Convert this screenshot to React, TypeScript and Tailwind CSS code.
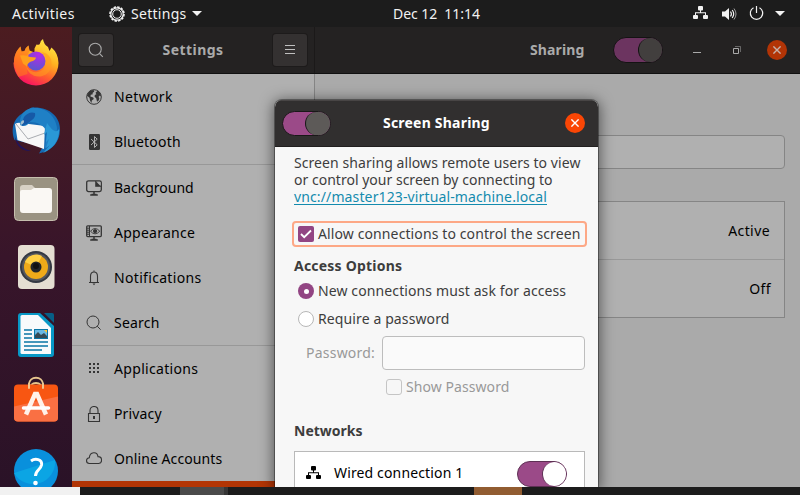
import React from "react";

function Lan({ className }: { className: string }) {
  return (
    <svg className={className} viewBox="0 0 16 14" fill="currentColor">
      <rect x="5" y="0" width="5" height="4.5" rx="1" />
      <rect x="0" y="9" width="5" height="4" rx="1" />
      <rect x="10" y="9" width="5" height="4" rx="1" />
      <path d="M7 4h1v2.2h5V9h-1V7.2H3V9H2V6.2h5z" />
    </svg>
  );
}

function Cross({ className }: { className: string }) {
  return (
    <span className={`grid size-5 shrink-0 place-items-center rounded-full ${className}`}>
      <svg className="size-2" viewBox="0 0 8 8" fill="none" stroke="currentColor" strokeWidth="1.4">
        <path d="M.4.4l7.2 7.2M7.6.4L.4 7.6" />
      </svg>
    </span>
  );
}

function Magnifier() {
  return (
    <svg className="mr-px mb-px size-4" viewBox="0 0 16 16" fill="none" stroke="currentColor" strokeWidth="1.1">
      <circle cx="7.2" cy="7.2" r="6" />
      <path d="M11.4 11.4l3.4 3.4" />
    </svg>
  );
}

const Monitor = () => <path d="M5.5 14.5h5M8 12v2.5M4.2 15h7.6" strokeWidth="1.5" />;

const icons: Record<string, React.ReactNode> = {
  Network: (
    <>
      <circle cx="8" cy="8" r="7.3" />
      <path
        d="M1.5 5l3-3.4 3-.6.8 1.6L6.5 4l.3 1.2-2 .6-.4 1.6 2.8 1 .6 1.6-2 1.6-.3 2.4-1.4-2.2-.6-3L1 6.8zM9.5 3.8L11.8 1.5l2.4 2.3 1 3.6-1.4-1-1.2 1.4.8 2-1.2 2.4-1.2.2-.8-3.2-1.6-1.4.2-1.8 1.6-.8z"
        fill="currentColor"
        stroke="none"
      />
    </>
  ),
  Bluetooth: (
    <>
      <rect x="3" y="0" width="11" height="16" rx="1.2" fill="#343434" stroke="none" />
      <path d="M5 5l6.2 5.8-2.7 2.7V2.5l2.7 2.7L5 11" stroke="#b0b0b0" strokeWidth="1" />
    </>
  ),
  Background: (
    <>
      <rect x=".7" y=".8" width="14.6" height="10.8" rx="1.8" strokeWidth="1.3" />
      <path d="M9.5 1v5.5H15L9.5 1z" fill="currentColor" strokeWidth=".6" />
      <path d="M11 2.3h3.5v3.2z" fill="#b0b0b0" stroke="none" />
      <Monitor />
    </>
  ),
  Appearance: (
    <>
      <rect x=".7" y=".8" width="14.6" height="10.8" rx="1" strokeWidth="1.3" />
      <path d="M3.5 1v10.5M1 3.2h2.5M1 5.2h2.5M1 7.2h2.5M1 9.2h2.5" />
      <path d="M4.5 6.2Q9 .8 13.800 6.200 9 11.500 4.500 6.200z" strokeWidth=".9" />
      <circle cx="9.1" cy="6.2" r="1.6" fill="currentColor" />
      <Monitor />
    </>
  ),
  Notifications: (
    <>
      <path d="M3 12.5h10M4.5 12V6.5C4.5 3.8 5.8 2 8 2s3.5 1.8 3.5 4.5V12M8 .5V2" strokeWidth="1.1" />
      <path d="M6.5 13.5h3L8 15.2z" fill="currentColor" stroke="none" />
    </>
  ),
  Search: (
    <>
      <circle cx="7" cy="7" r="6" />
      <path d="M11.2 11.2l3.4 3.4" />
    </>
  ),
  Applications: (
    <g fill="currentColor" stroke="none">
      {[3, 7, 11].map((y) => [3, 7, 11].map((x) => <rect key={`${x}-${y}`} x={x} y={y - 1} width="2" height="2" />))}
    </g>
  ),
  Privacy: (
    <>
      <path d="M2.5 7.5h11v8h-11zM4 7.5V4.6C4 2 5.6.5 8 .5s4 1.5 4 4.1v2.9" strokeWidth="1.1" />
      <rect x="7" y="10" width="2" height="3" fill="currentColor" stroke="none" />
    </>
  ),
  "Online Accounts": (
    <path d="M3.3 12.5C-.4 12.3-.4 7.2 3.3 6.800 3.900.4 11.200.2 12 5.600c4.600-.2 4.600 6.400.8 6.900z" strokeWidth="1.1" />
  ),
};

function Row({ name, tracking }: { name: string; tracking: string }) {
  return (
    <div className="flex h-[45px] items-center pl-[14px]">
      <svg className="size-4 text-[#353535]" viewBox="0 0 16 16" fill="none" stroke="currentColor">
        {icons[name]}
      </svg>
      <span className={`ml-3 text-black ${tracking}`}>{name}</span>
    </div>
  );
}

function DockIcons() {
  const cell = "h-[68px] w-[72px] shrink-0";
  return (
    <>
      <svg className={cell} viewBox="0 0 72 68">
        <defs>
          <linearGradient id="fox" x1=".8" y1="0" x2=".3" y2="1">
            <stop offset="0" stopColor="#fff14a" />
            <stop offset=".4" stopColor="#ffb020" />
            <stop offset=".68" stopColor="#ff602d" />
            <stop offset="1" stopColor="#f80c66" />
          </linearGradient>
          <radialGradient id="globe" cx=".65" cy=".15" r=".9">
            <stop offset="0" stopColor="#b52ae6" />
            <stop offset="1" stopColor="#5857cf" />
          </radialGradient>
        </defs>
        <path
          d="M14 33c0-6 2-11 6.500-15.500l1 5 3-.5q1.500-4 4-5.500l1 5 5 2v-4l2-4q3 1 3.500-1 0-2.500 3-4.500 .5 5 5 8l1.500 4 2-3.500q7 6 7 15.500a22.500 22.500 0 01-45 0z"
          fill="url(#fox)"
        />
        <path d="M14 33c0-6 2-11 6.500-15.500l1 5 3-.5q1.500-4 4-5.500l1 5.500-3 6 1 17-9 3q-4-7-4.500-15z" fill="#ff7a1d" opacity=".6" />
        <circle cx="36" cy="32" r="9.500" fill="url(#globe)" />
        <path d="M20 26.500q6-1 10 1.500l6 .5q-.5 3-5 4-4 2-4 5l-4-3z" fill="#ffa01c" />
        <path d="M26 34c1 12 18 12 20 1 1-6-2-10-5-12 9 1 12 8 10 16-5 13-25 11-25-5z" fill="#ff9a20" opacity=".6" />
      </svg>
      <svg className={cell} viewBox="0 0 72 68">
        <path d="M14.500 43c-5-14 1-25 13-29 2-3 5-4.500 7-3.500 16 0 26 10 25.500 23-.5 11-7 20-21 23l4-7z" fill="#156ab3" />
        <path d="M15 40c3 7 8 12 16 14-8 1-15-5-16-14z" fill="#21145a" />
        <path d="M15 27q3-2 6-1l24 3-1 23-26.500-9z" fill="#f7f7f7" />
        <path d="M16 27l12 15 17-6" fill="none" stroke="#a9acb1" />
        <path d="M20 28c-1-10 5-17 14-17 12-1 22 9 23 20 0 9-5 17-12 20l2-16c-3-7-10-10-17-10-3 4-6 5-10 3z" fill="#1f80c6" />
        <path d="M47 26l-3 12 3-3-1 10 3-3-3 9 4-3-7 8c10-4 17-13 16-24-3 5-7 1-12-6z" fill="#2a98d6" />
        <path d="M24 20q5-6 11-4 1 4-3 7-4 4-10 6 0-5 2-9z" fill="#1659a7" />
        <path d="M20.500 28q-.5-4 3-5 2 3-3 5z" fill="#a3bdce" />
      </svg>
      <svg className={cell} viewBox="0 0 72 68">
        <rect x="14.500" y="12.500" width="43" height="43" rx="4" fill="#9a9382" stroke="#c6bfae" />
        <path d="M20 23q0-3 3-3h9l3 3v4H20z" fill="#d7d1c5" />
        <path d="M20 27q0-2 2-2h9l3-2h15q3 0 3 3v19q0 3-3 3H23q-3 0-3-3z" fill="#faf8f4" />
      </svg>
      <svg className={cell} viewBox="0 0 72 68">
        <rect x="18" y="12" width="36.500" height="44" rx="4" fill="#e4ded2" />
        <circle cx="36" cy="34" r="16" fill="#343943" />
        <circle cx="36" cy="34" r="14" fill="#55585f" />
        <circle cx="36" cy="34" r="12" fill="#efaa19" />
        <path d="M36 34L25 29a12 12 0 0117-6z" fill="#ffd043" />
        <circle cx="36" cy="34" r="5.500" fill="#222529" />
        <circle cx="36" cy="33" r="3" fill="#111" />
      </svg>
      <svg className={cell} viewBox="0 0 72 68">
        <path d="M21 12h19l14 13v28q0 3-3 3H21q-3 0-3-3V15q0-3 3-3z" fill="#0798c6" />
        <path d="M44 12h8q2 0 2 2v8z" fill="#075f87" />
        <path d="M22 14h16l13 13v26H22q-1.500 0-1.500-1.500v-36q0-1.500 1.500-1.500z" fill="#f8fafb" />
        <path d="M24 29h8M24 33h8M24 37h8M24 41h24M24 45h24M24 49h18" stroke="#0875a5" strokeWidth="1.600" />
        <rect x="34.500" y="28.500" width="13" height="9" fill="#68b8e3" stroke="#0875a5" />
        <path d="M35 37v-3l3-3 3 3 3-2 3 3v2z" fill="#344a55" />
        <path d="M44 29h3v3z" fill="#ffc535" />
      </svg>
      <svg className={cell} viewBox="0 -2.500 72 68">
        <path d="M29 19c0-10 14-10 14 0" fill="none" stroke="#e7c58d" strokeWidth="1.800" />
        <rect x="14" y="13" width="44" height="37" rx="4" fill="#f85612" />
        <path d="M14 35L58 25v21q0 4-4 4H18q-4 0-4-4z" fill="#fa7043" />
        <path d="M29 12v4.500M43 12v4.500" stroke="#f2d29d" strokeWidth="1.800" strokeLinecap="round" />
        <path d="M29 17c0-9 14-9 14 0" transform="translate(0 -4)" fill="none" stroke="#e7c58d" strokeWidth="1.800" />
        <path d="M26 43l9-20.500h2L46 43" fill="none" stroke="#fff2ea" strokeWidth="4.500" />
        <path d="M23.500 36.500h25" stroke="#fff" strokeWidth="3.500" strokeLinecap="round" />
      </svg>
      <svg className={cell} viewBox="0 0 72 68">
        <circle cx="36" cy="34" r="22" fill="#0990dc" />
        <path d="M14 36L55 23a22 22 0 01-41 13z" fill="#0ba5e4" />
        <path d="M31 24c4-3 11.500-2 10.500 4-1 5-6 5-6 11" fill="none" stroke="#fff" strokeWidth="3" />
        <circle cx="35.500" cy="46" r="2.300" fill="#fff" />
      </svg>
    </>
  );
}

function TopBar() {
  return (
    <div className="flex h-[27px] shrink-0 items-center bg-[#1c1c1c] text-[14px] text-[#f2f2f2]">
      <div className="flex w-[393px] items-center">
        <span className="ml-3 w-[97px] tracking-[0.032em]">Activities</span>
        <svg className="size-4" viewBox="0 0 16 16" fill="none" stroke="currentColor">
          <circle cx="8" cy="8" r="7" strokeWidth="1.6" strokeDasharray="2.5 1.16" />
          <circle cx="8" cy="8" r="6.2" strokeWidth="1.2" />
          <circle cx="8" cy="8" r="4.3" />
        </svg>
        <span className="ml-1.5 tracking-[0.02em]">Settings</span>
        <svg className="ml-[5px] h-[5px] w-[10px]" viewBox="0 0 10 5" fill="currentColor"><path d="M0 0h10L5 5z" /></svg>
      </div>
      <span className="whitespace-pre pb-px tracking-[-0.004em]">Dec 12  11:14</span>
      <div className="ml-auto flex items-center pr-[15px]">
        <Lan className="mb-px h-[14px] w-4" />
        <svg className="ml-3 h-[14px] w-[16px]" viewBox="0 0 16 14" fill="none" stroke="currentColor">
          <path d="M1 4.5h3L8 1v12L4 9.5H1z" fill="currentColor" stroke="none" />
          <path d="M9.5 4.5q1.8 2.5 0 5M11.2 3q3 4 0 8" strokeWidth="1.2" />
          <path d="M13 1.5q4 5.500 0 11" opacity=".6" />
        </svg>
        <svg className="ml-3 size-[15px]" viewBox="0 0 15 15" fill="none" stroke="currentColor" strokeWidth="1.2">
          <path d="M7.5 0v7M4.5 1.7a6.2 6.200 0 106 0" />
        </svg>
        <svg className="ml-[11px] h-[5px] w-[10px]" viewBox="0 0 10 5" fill="currentColor"><path d="M0 0h10L5 5z" /></svg>
      </div>
    </div>
  );
}

function Dialog() {
  return (
    <div className="absolute top-[100px] left-[275px] h-[387px] w-[323px] overflow-hidden rounded-t-[7px] bg-[#f7f7f7] text-[#3d3d3d]">
      <div className="flex h-[47px] items-center border-b border-[#211f1f] bg-[#312f2f] px-[7px] text-white shadow-[inset_0_1px_0_#484545]">
        <span className="flex h-[25px] w-[49px] justify-end rounded-full border border-[#191818] bg-[#9b4a88]">
          <span className="h-[23px] w-[25px] rounded-full border-l border-[#191818] bg-[#5d5a58]" />
        </span>
        <b className="ml-[52px] pb-0.5 text-[14px] tracking-[0.015em]">Screen Sharing</b>
        <Cross className="mr-[6px] ml-auto bg-[#fa4605] text-white" />
      </div>
      <div className="pr-[13px] pl-[19px]">
        <div className="pt-[7px] leading-[17px] whitespace-nowrap">
          <p className="tracking-[0.005em]">Screen sharing allows remote users to view</p>
          <p className="tracking-[0.001em]">or control your screen by connecting to</p>
          <p><span className="inline-block h-[17px] border-b border-[#148bae] tracking-[0.009em] text-[#148bae]">vnc://master123-virtual-machine.local</span></p>
        </div>
        <div className="mt-[16px] -ml-[2px] flex h-[26px] w-[295px] items-center rounded-[4px] border-2 border-[#fda886] pl-1 whitespace-nowrap">
          <span className="grid size-4 shrink-0 place-items-center rounded-[2px] bg-[#924583]">
            <svg className="size-3" viewBox="0 0 12 12" fill="none" stroke="white" strokeWidth="1.8"><path d="M1 6l3.2 3.200L11 2.500" /></svg>
          </span>
          <span className="ml-1 pb-0.5 tracking-[0.008em]">Allow connections to control the screen</span>
        </div>
        <b className="mt-[8px] block h-[22px] leading-[22px] tracking-[0.015em]">Access Options</b>
        <div className="flex h-[28px] items-center pl-1">
          <span className="grid size-4 place-items-center rounded-full bg-[#924583]"><span className="size-[5px] rounded-full bg-white" /></span>
          <span className="ml-1 pb-0.5 tracking-[0.008em]">New connections must ask for access</span>
        </div>
        <div className="flex h-[28px] items-center pl-1">
          <span className="size-4 rounded-full border border-[#b7b7b7] bg-white" />
          <span className="ml-1 pb-0.5 tracking-[0.008em]">Require a password</span>
        </div>
        <div className="mt-[3px] flex h-[34px] items-center text-[#999]">
          <span className="ml-3 w-[76px] shrink-0 pb-0.5 tracking-[0.016em]">Password:</span>
          <span className="h-[34px] w-[203px] rounded-[4px] border border-[#bdbdbd] bg-[#fafafa]" />
        </div>
        <div className="mt-[9px] flex h-4 items-center pl-[92px] text-[#999]">
          <span className="size-4 rounded-[3px] border border-[#c5c5c5]" />
          <span className="ml-1 pb-0.5 tracking-[0.005em]">Show Password</span>
        </div>
        <b className="mt-[25px] block h-[22px] leading-[22px]">Networks</b>
        <div className="mt-[9px] flex h-[46px] w-[291px] items-center border border-[#b9b9b9] bg-white pr-[17px] pl-[11px] text-black">
          <Lan className="mb-0.5 h-[14px] w-4" />
          <span className="ml-3 pb-[3px] tracking-[0.01em]">Wired connection 1</span>
          <span className="mb-px ml-auto flex h-[26px] w-[50px] justify-end rounded-full border border-[#5e3054] bg-[#9b4a88]">
            <span className="size-6 rounded-full border-l border-[#5e3054] bg-white" />
          </span>
        </div>
      </div>
    </div>
  );
}

export default function App() {
  return (
    <div className="relative flex h-[495px] w-[800px] flex-col overflow-hidden bg-[#aaa] font-['Noto_Sans','Liberation_Sans',sans-serif] text-[14px]">
      <TopBar />
      <div className="flex h-[460px]">
        <aside className="flex w-[72px] shrink-0 flex-col overflow-hidden bg-linear-to-b from-[#4c1c20] via-[#38152a] to-[#2a1227] pt-[2px]">
          <DockIcons />
        </aside>
        <section className="flex min-w-0 flex-1 flex-col">
          <header className="flex h-[47px] shrink-0 border-b border-[#111] bg-[#242222] text-[#aaa]">
            <div className="flex w-[243px] items-center border-r border-[#1b1919] px-[7px]">
              <span className="grid h-8 w-[34px] place-items-center rounded-[3px] bg-[#343131] shadow-[0_0_0_1px_#1d1b1b]"><Magnifier /></span>
              <b className="flex-1 pb-0.5 text-center tracking-[0.033em]">Settings</b>
              <span className="flex h-8 w-[34px] flex-col items-center justify-center gap-[3px] rounded-[3px] bg-[#343131] pb-px shadow-[0_0_0_1px_#1d1b1b]">
                <i className="h-px w-[10px] bg-[#c0c0c0]" />
                <i className="h-px w-[10px] bg-[#c0c0c0]" />
                <i className="h-px w-[10px] bg-[#c0c0c0]" />
              </span>
            </div>
            <div className="flex flex-1 items-center pr-[13px]">
              <b className="ml-[215px] w-[83px] pb-0.5 tracking-[0.01em]">Sharing</b>
              <span className="flex h-[26px] w-[50px] justify-end rounded-full border border-[#141313] bg-[#6c3460]">
                <span className="size-6 rounded-full border-l border-[#141313] bg-[#423f3e]" />
              </span>
              <i className="mt-[5px] ml-[30px] h-px w-2 bg-[#aaa]" />
              <svg className="ml-8 size-2" viewBox="0 0 8 8" fill="none" stroke="#aaa">
                <path d="M.5 2.5h5v5h-5z" /><path d="M2 .5h5.500V6" opacity=".5" />
              </svg>
              <Cross className="ml-auto bg-[#b23406] text-[#c5b0aa]" />
            </div>
          </header>
          <div className="flex flex-1">
            <nav className="flex w-[243px] flex-col border-r border-[#858585] bg-[#b0b0b0]">
              <Row name="Network" tracking="tracking-[0.025em]" />
              <Row name="Bluetooth" tracking="tracking-[0.014em]" />
              <div className="h-px bg-[#989898]" />
              <Row name="Background" tracking="tracking-[0em]" />
              <Row name="Appearance" tracking="tracking-[0.018em]" />
              <Row name="Notifications" tracking="tracking-[0.023em]" />
              <Row name="Search" tracking="tracking-[0.014em]" />
              <div className="h-px bg-[#989898]" />
              <Row name="Applications" tracking="tracking-[0.023em]" />
              <Row name="Privacy" tracking="tracking-[0.01em]" />
              <Row name="Online Accounts" tracking="tracking-[0.006em]" />
              <div className="flex-1 bg-[#b23505]" />
            </nav>
            <main className="flex-1 bg-[#aaa] px-[15px] pt-[61px] text-black">
              <div className="h-[34px] rounded-[4px] border border-[#858585] bg-[#b0b0b0]" />
              <div className="mt-[32px] border border-[#858585] bg-[#b0b0b0]">
                <div className="flex h-[58px] items-center justify-end border-b border-[#989898] pr-[14px] tracking-[0.03em]">Active</div>
                <div className="flex h-[57px] items-center justify-end pr-[13px] tracking-[0.03em]">Off</div>
              </div>
            </main>
          </div>
        </section>
      </div>
      <div className="absolute top-[100px] left-[275px] h-[387px] w-[323px] rounded-t-[7px] shadow-[0_2px_14px_2px_rgba(0,0,0,0.5),0_0_0_1px_rgba(0,0,0,0.35)]" />
      <Dialog />
      <footer className="relative flex h-2 shrink-0 bg-[#1c1c1c]">
        <span className="w-20 bg-[#f1f1f1]" />
        <span className="ml-[100px] w-[44px] bg-[#4a4a4a]" />
        <span className="w-1 bg-[#363636]" />
        <span className="ml-[246px] w-12 bg-[#915c31]" />
      </footer>
    </div>
  );
}
